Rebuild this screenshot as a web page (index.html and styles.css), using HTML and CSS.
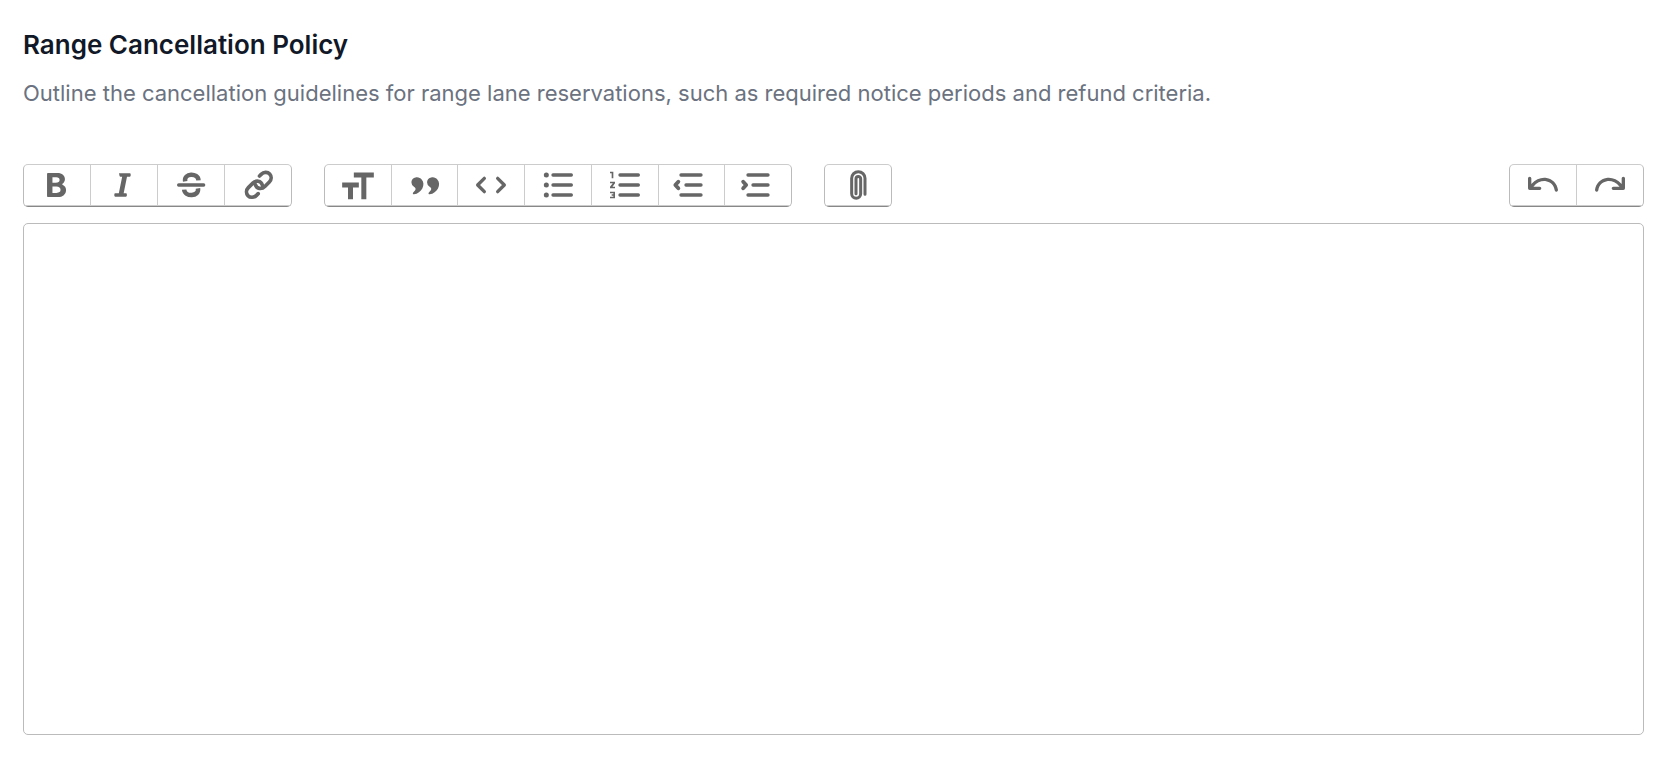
FILE: index.html
```html
<!DOCTYPE html>
<html lang="en">
<head>
<meta charset="utf-8">
<title>Range Cancellation Policy</title>
<link rel="stylesheet" href="styles.css">
</head>
<body>
<main class="field">
  <label class="field-title" for="policy">Range Cancellation Policy</label>
  <p class="field-hint" id="policy-hint">Outline the cancellation guidelines for range lane reservations, such as required notice periods and refund criteria.</p>
  <div class="toolbar" role="toolbar" aria-label="Formatting">
    <div class="group text-tools">
      <button type="button" class="tool" aria-label="Bold"><svg class="icon" viewBox="0 0 24 24"><path d="M6.522 19.242a.5.5 0 0 1-.5-.5V5.35a.5.5 0 0 1 .5-.5h5.783c1.347 0 2.46.345 3.24.982.783.64 1.216 1.562 1.216 2.683 0 1.13-.587 2.129-1.476 2.71a.35.35 0 0 0 .049.613c1.259.56 2.101 1.742 2.101 3.22 0 1.282-.483 2.334-1.363 3.063-.876.726-2.132 1.12-3.66 1.12h-5.89ZM9.27 7.347v3.362h1.97c.766 0 1.347-.17 1.733-.464.38-.291.587-.716.587-1.27 0-.53-.183-.928-.513-1.198-.334-.273-.838-.43-1.505-.43H9.27Zm0 5.606v3.791h2.389c.832 0 1.448-.177 1.853-.497.399-.315.614-.786.614-1.423 0-.62-.22-1.077-.63-1.385-.418-.313-1.053-.486-1.905-.486H9.27Z"/></svg></button>
      <button type="button" class="tool" aria-label="Italic"><svg class="icon" viewBox="0 0 24 24"><path d="M9 5h6.500a.5.5 0 0 1 .5.5v1a.5.5 0 0 1-.5.5h-1.700l-2 10h1.400a.5.5 0 0 1 .5.5v1a.5.5 0 0 1-.5.5H6.700a.5.5 0 0 1-.5-.5v-1a.5.5 0 0 1 .5-.5h2.200l2-10H9.800a.5.5 0 0 1-.5-.5z"/></svg></button>
      <button type="button" class="tool" aria-label="Strikethrough"><svg class="icon line" viewBox="0 0 24 24"><path d="M4.600 12h15" stroke-width="2"/><path d="M8.500 9.800C7.500 4.700 16.200 4.500 16.500 9.200M7.900 14.800C8.300 19.300 17 19.200 16.200 14" stroke-width="2.700" stroke-linecap="butt"/></svg></button>
      <button type="button" class="tool" aria-label="Link"><svg class="icon line" viewBox="0 0 24 24"><path d="M12.900 6.600l1-1c1.500-1.500 3.900-1.500 5.100-.2s1.200 3.400-.2 4.800l-2.700 2.700c-1.800 1.800-5 1.600-5.700-1.200M12.100 17.200l-1 1c-1.500 1.500-3.900 1.500-5.100.2s-1.200-3.400.2-4.800l2.700-2.700c1.800-1.800 5-1.600 5.700 1.200" stroke-width="2.200"/></svg></button>
    </div>
    <div class="group block-tools">
      <button type="button" class="tool" aria-label="Heading"><svg class="icon" viewBox="0 0 24 24"><path d="M21.500 7.500v-3h-12v3H14v13h3v-13h4.500ZM9 13.500h3.500v-3h-10v3H6v7h3v-7Z"/></svg></button>
      <button type="button" class="tool" aria-label="Quote"><svg class="icon" viewBox="0 0 24 24"><path id="q" d="M4.581 8.471c.44-.5 1.056-.834 1.758-.995C8.074 7.17 9.201 7.822 10 8.752c1.354 1.578 1.33 3.555.394 5.277-.941 1.731-2.788 3.163-4.988 3.56a.622.622 0 0 1-.653-.317c-.113-.205-.121-.49.16-.764.294-.286.567-.566.791-.835.222-.266.413-.54.524-.815.113-.28.156-.597.026-.908-.128-.303-.39-.524-.72-.69a3.02 3.02 0 0 1-1.674-2.7c0-.905.283-1.59.72-2.088Z"/><use href="#q" x="9.4"/></svg></button>
      <button type="button" class="tool" aria-label="Code"><svg class="icon line" viewBox="0 0 24 24"><path d="M8 8l-4 4 4 4M16 8l4 4-4 4" stroke-width="2"/></svg></button>
      <button type="button" class="tool" aria-label="Bullets"><svg class="icon line" viewBox="0 0 24 24"><path d="M9 6h11M9 12h11M9 18h11" stroke-width="2"/><path d="M5 6h0M5 12h0M5 18h0" stroke-width="3"/></svg></button>
      <button type="button" class="tool" aria-label="Numbers"><svg class="icon" viewBox="0 0 24 24"><path d="M3 4h2v4H4V5H3V4Zm2.500 6H6v1l-1.500 2H6v1H3v-1l1.667-2H3v-1h2.500ZM3 17v-1h3v4H3v-1h2v-.5H4v-1h1V17H3Z"/><path class="line" d="M9 6h11M9 12h11M9 18h11" stroke-width="2"/></svg></button>
      <button type="button" class="tool" aria-label="Decrease level"><svg class="icon line" viewBox="0 0 24 24"><path d="M6 6h12M9 12h9M6 18h12" stroke-width="2"/><path d="M4.400 10l-1.800 2 1.800 2" stroke-width="2.300"/></svg></button>
      <button type="button" class="tool" aria-label="Increase level"><svg class="icon line" viewBox="0 0 24 24"><path d="M6 6h12M9 12h9M6 18h12" stroke-width="2"/><path d="M3.100 10l1.800 2-1.800 2" stroke-width="2.300"/></svg></button>
    </div>
    <div class="group file-tools">
      <button type="button" class="tool" aria-label="Attach files"><svg class="icon line" viewBox="0 0 24 24"><path d="M16.200 17.500V8a4 4 0 0 0-8 0v9.300a2.700 2.700 0 0 0 5.400 0V8.300a1.400 1.400 0 0 0-2.800 0v9" stroke-width="1.800"/></svg></button>
    </div>
    <div class="group history-tools">
      <button type="button" class="tool" aria-label="Undo"><svg class="icon" viewBox="0 0 24 24"><path id="u" d="M3 14a1 1 0 0 0 1 1h6a1 1 0 1 0 0-2H6.257c2.247-2.764 5.151-3.668 7.579-3.264 2.589.432 4.739 2.356 5.174 5.405a1 1 0 0 0 1.980-.283c-.564-3.950-3.415-6.526-6.825-7.095C11.084 7.250 7.630 8.377 5 11.390V8a1 1 0 0 0-2 0v6Z"/></svg></button>
      <button type="button" class="tool" aria-label="Redo"><svg class="icon" viewBox="0 0 24 24"><use href="#u" transform="matrix(-1 0 0 1 24 0)"/></svg></button>
    </div>
  </div>
  <textarea class="editor" id="policy" aria-describedby="policy-hint"></textarea>
</main>
</body>
</html>
```
FILE: styles.css
```css
* { box-sizing: border-box; }
body {
  margin: 0;
  background: #fff;
  font-family: Inter, "Liberation Sans", sans-serif;
}
.field {
  display: flex;
  flex-direction: column;
  min-height: 100vh;
  padding: 24px 20px 49px 23px;
}
.field-title {
  color: #111827;
  font-size: 26px;
  font-weight: 600;
  line-height: 42px;
}
.field-hint {
  margin: 8px 0 0;
  color: #6b7280;
  font-size: 22px;
  line-height: 38px;
}
.toolbar {
  display: flex;
  gap: 32px;
  margin-top: 52px;
}
.group {
  display: flex;
  border: 1px solid #bbb;
  border-top-color: #ccc;
  border-bottom-color: #888;
  border-radius: 5px;
}
.text-tools { width: 269px; }
.block-tools { width: 468px; }
.file-tools { width: 68px; }
.history-tools {
  width: 135px;
  margin-left: auto;
}
.tool {
  display: flex;
  flex: 1;
  align-items: center;
  justify-content: center;
  height: 41px;
  padding: 0;
  border: 0;
  border-bottom: 1px solid #ccc;
  background: transparent;
  color: #666;
}
.tool + .tool { border-left: 1px solid #ccc; }
.icon {
  width: 40px;
  height: 40px;
  fill: currentColor;
}
.line {
  fill: none;
  stroke: currentColor;
  stroke-linecap: round;
  stroke-linejoin: round;
}
.editor {
  flex: 1;
  width: 100%;
  margin: 16px 0 0;
  padding: 10px 16px;
  border: 1px solid #bbb;
  border-radius: 5px;
  outline: 0;
  resize: none;
  color: #111827;
  font: inherit;
  font-size: 22px;
}
```
